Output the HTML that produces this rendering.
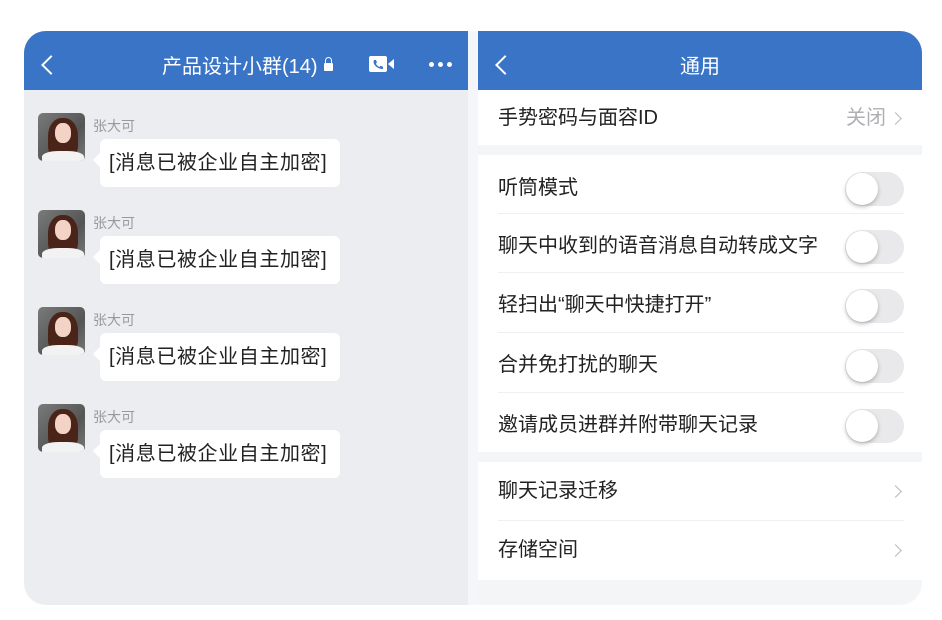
<!DOCTYPE html>
<html><head><meta charset="utf-8"><style>
*{margin:0;padding:0;box-sizing:border-box}
body{width:942px;height:620px;background:#fff;font-family:"Liberation Sans","Noto Sans CJK SC",sans-serif;position:relative;overflow:hidden}
.left{position:absolute;left:24px;top:31px;width:444px;height:574px;background:#ebedf1;border-radius:22px 0 0 22px;overflow:hidden}
.div{position:absolute;left:468px;top:31px;width:10px;height:574px;background:#f4f6f9}
.right{position:absolute;left:478px;top:31px;width:444px;height:574px;background:#f4f5f7;border-radius:0 22px 22px 0;overflow:hidden}
.hdr{position:absolute;left:0;top:0;width:100%;height:59px;background:#3a74c7;color:#fff}
.hdr .t{position:absolute;top:0;line-height:72px;font-size:20px;white-space:nowrap}
.back{position:absolute;left:20px;top:27px;width:14px;height:14px;border-left:2.6px solid #fff;border-bottom:2.6px solid #fff;transform:rotate(45deg)}
.msg{position:absolute;left:14px}
.av{position:absolute;left:0;top:0;width:47px;height:48px;border-radius:5px;overflow:hidden;background:linear-gradient(135deg,#7a7a7a,#555 60%,#777)}
.av .hair{position:absolute;left:10px;top:5px;width:30px;height:40px;border-radius:45% 45% 30% 30%;background:#4a2418}
.av .face{position:absolute;left:17px;top:10px;width:16px;height:20px;border-radius:45%;background:#f2d3c6}
.av .body{position:absolute;left:4px;top:38px;width:42px;height:14px;border-radius:40% 40% 0 0;background:#f2f2f2}
.nm{position:absolute;left:55px;top:3px;font-size:14px;color:#999;white-space:nowrap}
.bub{position:absolute;left:62px;top:26px;height:48px;width:240px;background:#fff;border-radius:6px;font-size:20px;letter-spacing:0.6px;line-height:48px;padding-left:9px;color:#222;white-space:nowrap}
.bub:before{content:"";position:absolute;left:-5px;top:16px;width:10px;height:10px;background:#fff;transform:rotate(45deg)}
.sec{position:absolute;left:0;width:100%;background:#fff}
.row{position:absolute;left:20px;right:18px;font-size:20px;color:#222;white-space:nowrap}
.row .tx{position:absolute;left:0;top:-4px}
.line{position:absolute;left:20px;right:18px;height:1px;background:#eeeff2}
.tg{position:absolute;right:0;width:59px;height:34px;border-radius:17px;background:#e9e9eb}
.tg:after{content:"";position:absolute;left:1px;top:1px;width:32px;height:32px;border-radius:50%;background:#fff;box-shadow:0 2px 4px rgba(0,0,0,.25)}
.chev{position:absolute;right:4px;width:9px;height:9px;border-right:1.8px solid #b8b8bc;border-top:1.8px solid #b8b8bc;transform:rotate(45deg)}
</style></head><body>
<div class="left">
 <div class="hdr"><div class="back"></div>
  <div class="t" style="left:138px">产品设计小群(14)</div>
  <div style="position:absolute;left:300px;top:32px;width:9px;height:8px;background:#fff;border-radius:1px"></div>
  <div style="position:absolute;left:301px;top:26px;width:7px;height:8px;border:1.6px solid #fff;border-bottom:none;border-radius:4px 4px 0 0"></div>
  <div style="position:absolute;left:345px;top:25px;width:18px;height:16px;background:#fff;border-radius:2px"></div>
  <div style="position:absolute;left:364px;top:28px;width:0;height:0;border-top:5px solid transparent;border-bottom:5px solid transparent;border-right:6px solid #fff"></div>
  <svg style="position:absolute;left:348px;top:28px" width="12" height="11" viewBox="0 0 12 11"><path d="M2 1 L4 1 L5 3.5 L3.8 4.5 Q5 7 7.5 8 L8.5 6.8 L11 7.8 L11 10 Q5 10 2 5 Q1.2 3 2 1Z" fill="#3a74c7"/></svg>
  <div style="position:absolute;left:405px;top:31px;width:5px;height:5px;border-radius:50%;background:#fff;box-shadow:9px 0 #fff,18px 0 #fff"></div>
 </div>
 <div class="msg" style="top:82px"><div class="av"><div class="hair"></div><div class="face"></div><div class="body"></div></div><div class="nm">张大可</div><div class="bub">[消息已被企业自主加密]</div></div>
 <div class="msg" style="top:179px"><div class="av"><div class="hair"></div><div class="face"></div><div class="body"></div></div><div class="nm">张大可</div><div class="bub">[消息已被企业自主加密]</div></div>
 <div class="msg" style="top:276px"><div class="av"><div class="hair"></div><div class="face"></div><div class="body"></div></div><div class="nm">张大可</div><div class="bub">[消息已被企业自主加密]</div></div>
 <div class="msg" style="top:373px"><div class="av"><div class="hair"></div><div class="face"></div><div class="body"></div></div><div class="nm">张大可</div><div class="bub">[消息已被企业自主加密]</div></div>
</div>
<div class="div"></div>
<div class="right">
 <div class="hdr"><div class="back"></div><div class="t" style="left:0;width:100%;text-align:center">通用</div></div>
 <div class="sec" style="top:59px;height:55px">
  <div class="row" style="top:15px;height:26px"><span class="tx">手势密码与面容ID</span><span style="position:absolute;right:18px;top:-4px;color:#b0b0b4">关闭</span><div class="chev" style="top:9px"></div></div>
 </div>
 <div class="sec" style="top:124px;height:297px">
  <div class="row" style="top:17px;height:34px"><span class="tx" style="top:-1px">听筒模式</span><div class="tg"></div></div>
  <div class="line" style="top:58px"></div>
  <div class="row" style="top:75px;height:34px"><span class="tx" style="top:-1px">聊天中收到的语音消息自动转成文字</span><div class="tg"></div></div>
  <div class="line" style="top:117px"></div>
  <div class="row" style="top:134px;height:34px"><span class="tx" style="top:-1px">轻扫出“聊天中快捷打开”</span><div class="tg"></div></div>
  <div class="line" style="top:177px"></div>
  <div class="row" style="top:194px;height:34px"><span class="tx" style="top:-1px">合并免打扰的聊天</span><div class="tg"></div></div>
  <div class="line" style="top:237px"></div>
  <div class="row" style="top:254px;height:34px"><span class="tx" style="top:-1px">邀请成员进群并附带聊天记录</span><div class="tg"></div></div>
 </div>
 <div class="sec" style="top:431px;height:118px">
  <div class="row" style="top:16px;height:26px"><span class="tx">聊天记录迁移</span><div class="chev" style="top:9px"></div></div>
  <div class="line" style="top:58px"></div>
  <div class="row" style="top:75px;height:26px"><span class="tx">存储空间</span><div class="chev" style="top:9px"></div></div>
 </div>
</div>
</body></html>
